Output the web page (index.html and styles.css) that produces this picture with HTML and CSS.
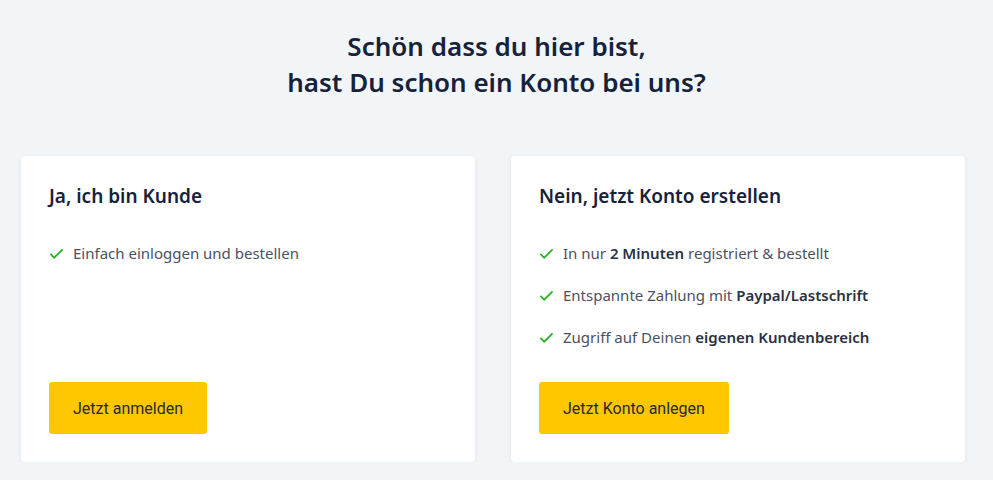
FILE: index.html
```html
<!DOCTYPE html>
<html lang="de">
<head>
<meta charset="utf-8">
<title>Konto</title>
<link rel="stylesheet" href="styles.css">
</head>
<body>
<main class="page">
  <h1 class="headline">Schön dass du hier bist,<br>hast Du schon ein Konto bei uns?</h1>
  <div class="cards">
    <section class="card">
      <h2 class="card-title">Ja, ich bin Kunde</h2>
      <ul class="features">
        <li><svg class="check" viewBox="0 0 16 16"><path d="M1.5 8.5l4 4 9-9"/></svg><span>Einfach einloggen und bestellen</span></li>
      </ul>
      <a class="btn" href="#">Jetzt anmelden</a>
    </section>
    <section class="card">
      <h2 class="card-title">Nein, jetzt Konto erstellen</h2>
      <ul class="features">
        <li><svg class="check" viewBox="0 0 16 16"><path d="M1.5 8.5l4 4 9-9"/></svg><span>In nur <b>2 Minuten</b> registriert &amp; bestellt</span></li>
        <li><svg class="check" viewBox="0 0 16 16"><path d="M1.5 8.5l4 4 9-9"/></svg><span>Entspannte Zahlung mit <b>Paypal/Lastschrift</b></span></li>
        <li><svg class="check" viewBox="0 0 16 16"><path d="M1.5 8.5l4 4 9-9"/></svg><span>Zugriff auf Deinen <b>eigenen Kundenbereich</b></span></li>
      </ul>
      <a class="btn" href="#">Jetzt Konto anlegen</a>
    </section>
  </div>
</main>
</body>
</html>
```
FILE: styles.css
```css
html, body {
  margin: 0;
  padding: 0;
  background: #f2f5f8;
}
body {
  font-family: "Noto Sans", Lato, sans-serif;
  color: #1b2334;
}
.page {
  padding: 28px 21px 0;
}
.headline {
  margin: 0;
  text-align: center;
  font-size: 26px;
  line-height: 36px;
  font-weight: 600;
  color: #17223a;
}
.cards {
  display: flex;
  gap: 36px;
  margin-top: 56px;
}
.card {
  width: 454px;
  height: 306px;
  box-sizing: border-box;
  background: #fff;
  border-radius: 4px;
  box-shadow: 0 1px 4px rgba(20, 40, 70, 0.08);
  padding: 28px 28px 28px;
  display: flex;
  flex-direction: column;
  align-items: flex-start;
}
.card-title {
  margin: 0;
  font-size: 19px;
  line-height: 24px;
  font-weight: 600;
  color: #17223a;
}
.features {
  list-style: none;
  margin: 34px 0 0;
  padding: 0;
  display: flex;
  flex-direction: column;
  gap: 20px;
}
.features li {
  display: flex;
  align-items: center;
  gap: 9px;
  font-size: 15px;
  line-height: 22px;
  color: #4a5163;
}
.features b {
  font-weight: 600;
  color: #2a3142;
}
.check {
  width: 15px;
  height: 15px;
  fill: none;
  stroke: #22b322;
  stroke-width: 1.8;
}
.btn {
  margin-top: auto;
  display: inline-flex;
  align-items: center;
  justify-content: center;
  height: 52px;
  padding: 0 24px;
  background: #fec700;
  border-radius: 3px;
  text-decoration: none;
  font-family: Roboto, "Noto Sans", sans-serif;
  font-size: 16px;
  color: #2a2a2a;
}
```
